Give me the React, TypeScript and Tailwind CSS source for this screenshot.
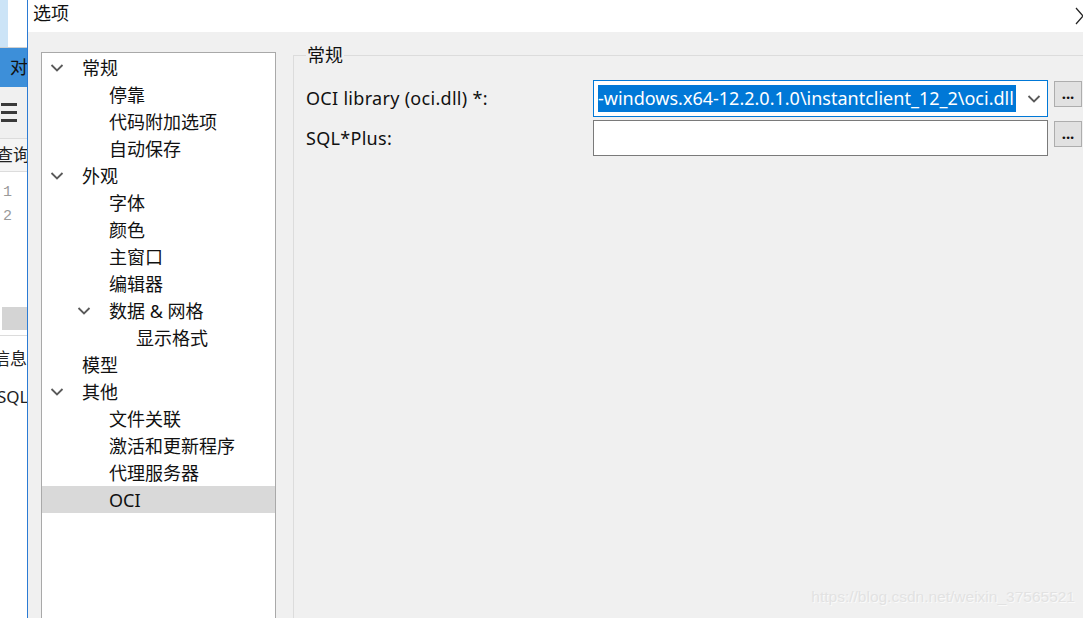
import React from "react";

type TreeNode = {
  label: string;
  level: number;
  expanded?: boolean;
  selected?: boolean;
};

const treeNodes: TreeNode[] = [
  { label: "常规", level: 0, expanded: true },
  { label: "停靠", level: 1 },
  { label: "代码附加选项", level: 1 },
  { label: "自动保存", level: 1 },
  { label: "外观", level: 0, expanded: true },
  { label: "字体", level: 1 },
  { label: "颜色", level: 1 },
  { label: "主窗口", level: 1 },
  { label: "编辑器", level: 1 },
  { label: "数据 & 网格", level: 1, expanded: true },
  { label: "显示格式", level: 2 },
  { label: "模型", level: 0 },
  { label: "其他", level: 0, expanded: true },
  { label: "文件关联", level: 1 },
  { label: "激活和更新程序", level: 1 },
  { label: "代理服务器", level: 1 },
  { label: "OCI", level: 1, selected: true },
];

const font = {
  fontFamily: '"Segoe UI", "Noto Sans", "Noto Sans CJK SC", sans-serif',
};

const Chevron = () => (
  <svg width="14" height="10" viewBox="0 0 14 10" className="shrink-0">
    <path d="M1.5 2 L7 7.5 L12.5 2" fill="none" stroke="#5a5a5a" strokeWidth="1.8" />
  </svg>
);

const indentClass = ["pl-[8px]", "pl-[35px]", "pl-[62px]"];

const TreeRow = ({ node }: { node: TreeNode }) => (
  <div
    className={`flex h-[27px] items-center ${indentClass[node.level]} ${
      node.selected ? "bg-[#d9d9d9]" : ""
    }`}
  >
    <div className="flex w-[32px] items-center">{node.expanded && <Chevron />}</div>
    <span className="whitespace-pre text-[18px] leading-none text-[#111]">{node.label}</span>
  </div>
);

const BackgroundApp = () => (
  <div className="flex w-[27px] shrink-0 flex-col overflow-hidden bg-white" style={font}>
    <div className="flex h-[48px] border-b border-[#d0d0d0]">
      <div className="w-[8px] bg-[#cce4f7]" />
      <div className="flex-1 bg-white" />
    </div>
    <div className="flex h-[39px] items-center bg-[#3d8fd9] pl-[10px] text-[18px] text-[#111]">
      <span className="whitespace-nowrap">对</span>
    </div>
    <div className="flex h-[52px] items-center border-b border-[#dcdcdc] bg-[#f0f0f0] pl-[1px]">
      <div className="flex flex-col gap-[5px]">
        <div className="h-[3px] w-[16px] bg-[#3a3a3a]" />
        <div className="h-[3px] w-[16px] bg-[#3a3a3a]" />
        <div className="h-[3px] w-[16px] bg-[#3a3a3a]" />
      </div>
    </div>
    <div className="flex h-[33px] items-center border-b border-[#dcdcdc] bg-[#f5f5f5] text-[17px] text-[#222]">
      <span className="-ml-[4px] whitespace-nowrap">查询器</span>
    </div>
    <div className="flex h-[135px] flex-col bg-white pt-[9px] pl-[3px] font-mono text-[15px] leading-[24px] text-[#9a9a9a]">
      <span>1</span>
      <span>2</span>
    </div>
    <div className="ml-[2px] h-[23px] bg-[#d4d4d4]" />
    <div className="h-[6px] border-b border-[#dcdcdc] bg-white" />
    <div className="flex flex-1 flex-col bg-white pt-[4px] text-[17px] leading-[38px] text-[#222]">
      <span className="-ml-[7px] whitespace-nowrap">信息</span>
      <span className="-ml-[3px] whitespace-nowrap">SQL</span>
    </div>
  </div>
);

const EllipsisButton = () => (
  <button className="flex h-[26px] w-[28px] items-end justify-center border border-[#adadad] bg-[#e1e1e1] pb-[5px] text-[15px] font-bold leading-none text-[#111]">
    ...
  </button>
);

export default function App() {
  return (
    <div className="relative flex h-[618px] w-[1083px] overflow-hidden bg-white" style={font}>
      <BackgroundApp />
      <div className="w-px shrink-0 bg-[#2b7bd4]" />
      <div className="flex flex-1 flex-col overflow-hidden">
        <div className="flex h-[32px] shrink-0 items-center justify-between bg-white pb-[6px] pl-[5px]">
          <span className="text-[18px] text-[#111]">选项</span>
          <svg width="10" height="18" viewBox="0 0 10 18" className="mr-[-2px] mt-[6px]">
            <path d="M1 1 L8 9 L1 17" fill="none" stroke="#222" strokeWidth="1.2" />
          </svg>
        </div>
        <div className="flex flex-1 bg-[#f0f0f0] pt-[20px] pl-[13px]">
          <div className="w-[235px] shrink-0 border border-b-0 border-[#a9a9a9] bg-white pt-[1px]">
            {treeNodes.map((n) => (
              <TreeRow key={n.label} node={n} />
            ))}
          </div>
          <div className="-mt-[6px] ml-[17px] flex-1">
            <fieldset className="mr-[-10px] h-[calc(100%+6px)] border-t border-l border-[#dcdcdc] pl-[12px]">
              <legend className="px-[1px] text-[18px] leading-[18px] text-[#111]">常规</legend>
              <div className="mt-[16px] flex flex-col gap-[3px]">
                <div className="flex items-center">
                  <span className="w-[287px] shrink-0 text-[18px] tracking-[0.3px] text-[#111]">
                    OCI library (oci.dll) *:
                  </span>
                  <div className="flex h-[37px] w-[455px] items-center border border-[#0078d7] bg-white pl-[4px]">
                    <span className="flex h-[27px] items-center whitespace-nowrap bg-[#0078d7] pr-[2px] text-[18px] text-white">
                      -windows.x64-12.2.0.1.0\instantclient_12_2\oci.dll
                    </span>
                    <div className="ml-auto mr-[6px]">
                      <Chevron />
                    </div>
                  </div>
                  <div className="ml-[6px] self-start pt-[1px]">
                    <EllipsisButton />
                  </div>
                </div>
                <div className="flex items-center">
                  <span className="w-[287px] shrink-0 text-[18px] tracking-[0.3px] text-[#111]">SQL*Plus:</span>
                  <div className="h-[36px] w-[455px] border border-[#7a7a7a] bg-white" />
                  <div className="ml-[6px] self-start pt-[1px]">
                    <EllipsisButton />
                  </div>
                </div>
              </div>
            </fieldset>
          </div>
        </div>
      </div>
      <div
        className="pointer-events-none absolute right-[8px] bottom-[10px] text-[15.5px] text-[#e2e2e2] [text-shadow:1px_1px_0_#fafafa]"
        style={{ fontFamily: '"Liberation Sans", Arial, sans-serif' }}
      >
        https://blog.csdn.net/weixin_37565521
      </div>
    </div>
  );
}
